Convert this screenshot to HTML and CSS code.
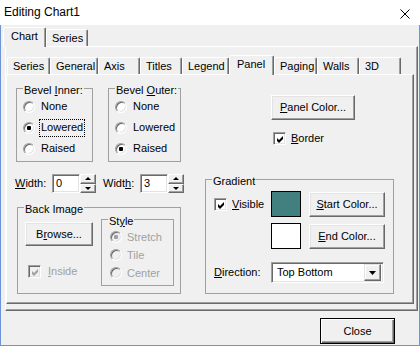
FILE: index.html
```html
<!DOCTYPE html>
<html>
<head>
<meta charset="utf-8">
<title>Editing Chart1</title>
<link rel="stylesheet" href="styles.css">
</head>
<body>
<div class="window">
  <div class="titlebar">
    <span class="title">Editing Chart1</span>
    <svg class="xicon" width="10" height="10" viewBox="0 0 10 10"><path d="M0.5 0.5L9.5 9.5M9.5 0.5L0.5 9.5" stroke="#000" stroke-width="1" fill="none"/></svg>
  </div>
  <div class="frame">
    <div class="tabrow otabs">
      <div class="tab sel">Chart</div>
      <div class="tab">Series</div>
    </div>
    <div class="outer-panel">
      <div class="tabrow itabs">
        <div class="tab">Series</div>
        <div class="tab">General</div>
        <div class="tab">Axis</div>
        <div class="tab">Titles</div>
        <div class="tab">Legend</div>
        <div class="tab sel">Panel</div>
        <div class="tab">Paging</div>
        <div class="tab">Walls</div>
        <div class="tab">3D</div>
      </div>
      <div class="inner-panel">
        <div class="col-left">
          <div class="bevel-row">
            <div class="group bevel-inner">
              <span class="legend">Bevel <u>I</u>nner:</span>
              <div class="radios">
                <div class="ropt"><span class="radio"></span><span class="rlabel">None</span></div>
                <div class="ropt"><span class="radio on"></span><span class="rlabel focus">Lowered</span></div>
                <div class="ropt"><span class="radio"></span><span class="rlabel">Raised</span></div>
              </div>
            </div>
            <div class="group bevel-outer">
              <span class="legend">Bevel <u>O</u>uter:</span>
              <div class="radios">
                <div class="ropt"><span class="radio"></span><span class="rlabel">None</span></div>
                <div class="ropt"><span class="radio"></span><span class="rlabel">Lowered</span></div>
                <div class="ropt"><span class="radio on"></span><span class="rlabel">Raised</span></div>
              </div>
            </div>
          </div>
          <div class="widthrow">
            <span class="wlabel"><u>W</u>idth:</span>
            <span class="field">0</span>
            <span class="spin"><span class="sbtn"><span class="tri up"></span></span><span class="sbtn"><span class="tri down"></span></span></span>
            <span class="wlabel wlabel2">Widt<u>h</u>:</span>
            <span class="field">3</span>
            <span class="spin"><span class="sbtn"><span class="tri up"></span></span><span class="sbtn"><span class="tri down"></span></span></span>
          </div>
          <div class="group back">
            <span class="legend">Back Image</span>
            <div class="back-left">
              <button class="btn browse">B<u>r</u>owse...</button>
              <div class="crow inside">
                <span class="check dis"><svg width="9" height="9" viewBox="0 0 9 9"><polygon points="1,3 3,5 7,1 7,4 3,8 1,6" fill="#a0a0a0"/></svg></span>
                <span class="clabel dim"><u>I</u>nside</span>
              </div>
            </div>
            <div class="group style">
              <span class="legend">St<u>y</u>le</span>
              <div class="sradios">
                <div class="sopt"><span class="radio dis on"></span><span class="slabel">Stretch</span></div>
                <div class="sopt"><span class="radio dis"></span><span class="slabel">Tile</span></div>
                <div class="sopt"><span class="radio dis"></span><span class="slabel">Center</span></div>
              </div>
            </div>
          </div>
        </div>
        <div class="col-right">
          <button class="btn panelcolor"><u>P</u>anel Color...</button>
          <div class="crow border-row">
            <span class="check"><svg width="9" height="9" viewBox="0 0 9 9"><polygon points="1,3 3,5 7,1 7,4 3,8 1,6" fill="#000"/></svg></span>
            <span class="clabel"><u>B</u>order</span>
          </div>
          <div class="group gradient">
            <span class="legend">Gradient</span>
            <div class="gbody">
              <div class="grow">
                <div class="gcell crow">
                  <span class="check"><svg width="9" height="9" viewBox="0 0 9 9"><polygon points="1,3 3,5 7,1 7,4 3,8 1,6" fill="#000"/></svg></span>
                  <span class="clabel vis"><u>V</u>isible</span>
                </div>
                <span class="swatch teal"></span>
                <button class="btn gbtn"><u>S</u>tart Color...</button>
              </div>
              <div class="grow grow2">
                <div class="gcell"></div>
                <span class="swatch white"></span>
                <button class="btn gbtn"><u>E</u>nd Color...</button>
              </div>
              <div class="grow grow3">
                <div class="gcell"><u>D</u>irection:</div>
                <div class="combo"><span class="ctext">Top Bottom</span><span class="cbtn"><svg width="7" height="4" viewBox="0 0 7 4"><polygon points="0,0 7,0 3.5,4" fill="#000"/></svg></span></div>
              </div>
            </div>
          </div>
        </div>
      </div>
    </div>
    <div class="footer">
      <button class="btn default closebtn">Close</button>
    </div>
  </div>
</div>
</body>
</html>
```
FILE: styles.css
```css
* { box-sizing: border-box; }
html, body { margin: 0; padding: 0; }
body {
  width: 420px; height: 346px; overflow: hidden;
  font: 11px/13px "Liberation Sans", Arial, sans-serif;
  color: #000; background: #fff;
}
u { text-decoration: underline; text-underline-offset: 1px; }
.window { width: 420px; height: 346px; display: flex; flex-direction: column; }

.titlebar {
  flex: 0 0 25px; height: 25px; background: #fff;
  display: flex; justify-content: space-between; align-items: flex-start;
  padding: 0 10px 0 4px; font-size: 12px; line-height: 25px;
}
.title { color: #000; }
.xicon { display: block; margin-top: 9px; }

.frame {
  flex: 1; background: #f0f0f0;
  border: 1px solid #6e94d6; border-top: 0;
  padding-top: 2px; display: flex; flex-direction: column;
}

/* tabs */
.tabrow { display: flex; align-items: flex-end; height: 19px; position: relative; z-index: 1; }
.tab {
  height: 17px; padding: 2px 0 0 5px; background: #f0f0f0;
  border: 1px solid; border-bottom: 0;
  border-color: #fff #696969 transparent #fff;
  box-shadow: inset -1px 0 #a0a0a0;
  border-radius: 2px 2px 0 0; white-space: nowrap; line-height: 13px;
}
.tab.sel { height: 20px; margin-bottom: -1px; padding-left: 7px; }
.otabs { margin-left: 2px; }
.otabs .tab:nth-child(1) { width: 43px; }
.otabs .tab:nth-child(2) { width: 42px; }
.itabs { margin-left: 1px; }
.itabs .tab:nth-child(1) { width: 43px; }
.itabs .tab:nth-child(2) { width: 48px; }
.itabs .tab:nth-child(3) { width: 42px; }
.itabs .tab:nth-child(4) { width: 42px; }
.itabs .tab:nth-child(5) { width: 47px; }
.itabs .tab:nth-child(6) { width: 45px; }
.itabs .tab:nth-child(7) { width: 43px; }
.itabs .tab:nth-child(8) { width: 42px; }
.itabs .tab:nth-child(9) { width: 42px; }

.outer-panel {
  margin-left: 4px; width: 413px; height: 265px;
  border: 1px solid; border-color: #fff #696969 #696969 #fff;
  box-shadow: inset -1px -1px #a0a0a0;
  padding-top: 8px;
}
.inner-panel {
  width: 408px; height: 230px;
  border: 1px solid; border-color: #fff #696969 #696969 #fff;
  box-shadow: inset -1px -1px #a0a0a0;
  display: flex; padding: 13px 0 0 9px;
}
.col-left { flex: 0 0 189px; display: flex; flex-direction: column; align-items: flex-start; }
.col-right { flex: 0 0 190px; display: flex; flex-direction: column; align-items: flex-start; }

/* group boxes */
.group { position: relative; border: 1px solid #a0a0a0; }
.legend {
  position: absolute; top: -5px; left: 6px; padding: 0 1px;
  background: #f0f0f0; line-height: 13px; white-space: nowrap;
}
.bevel-row { display: flex; }
.bevel-inner { width: 77px; height: 74px; }
.bevel-outer { width: 73px; height: 74px; margin-left: 15px; }
.radios { padding: 7px 0 0 6px; }
.ropt { display: flex; align-items: center; height: 21px; }
.rlabel { margin-left: 4px; border: 1px dotted transparent; padding: 1px 1px 2px 1px; }
.rlabel.focus { border-color: #000; }

.radio {
  flex: none; position: relative; width: 12px; height: 12px; border-radius: 50%;
  border: 1px solid; border-color: #a0a0a0 #fff #fff #a0a0a0;
  background: #fff;
  box-shadow: inset 1px 1px #696969, inset -1px -1px #e3e3e3;
}
.radio.dis { background: #f0f0f0; }
.radio.on::after {
  content: ""; position: absolute; left: 3px; top: 3px; width: 4px; height: 4px;
  border-radius: 1px; background: #000;
}
.radio.dis.on::after { background: #a0a0a0; }

/* width row */
.widthrow { display: flex; align-items: center; height: 19px; margin: 12px 0 0 -1px; }
.wlabel { width: 37px; }
.wlabel2 { margin-left: 7px; }
.field {
  width: 28px; height: 19px; background: #fff; padding: 1px 0 0 3px; line-height: 15px;
  border: 1px solid; border-color: #a0a0a0 #fff #fff #a0a0a0;
  box-shadow: inset 1px 1px #696969, inset -1px -1px #e3e3e3;
}
.spin { width: 16px; height: 19px; display: flex; flex-direction: column; }
.sbtn {
  flex: 1; display: flex; align-items: center; justify-content: center; background: #f0f0f0;
  border: 1px solid; border-color: #fff #696969 #696969 #fff;
  box-shadow: inset -1px -1px #a0a0a0;
}
.tri { width: 0; height: 0; border-left: 3px solid transparent; border-right: 3px solid transparent; }
.tri.up { border-bottom: 3px solid #000; }
.tri.down { border-top: 3px solid #000; }

/* back image */
.back { width: 164px; height: 87px; margin: 14px 0 0 1px; display: flex; }
.back-left { width: 68px; margin: 14px 0 0 7px; }
.browse { width: 68px; height: 24px; }
.inside { margin: 19px 0 0 3px; }
.style { width: 73px; height: 67px; margin: 11px 0 0 8px; }
.sradios { padding: 8px 0 0 8px; }
.sopt { display: flex; align-items: center; height: 18px; }
.slabel { margin-left: 5px; color: #a0a0a0; }

/* buttons */
.btn {
  font: inherit; color: #000; padding: 0; margin: 0; background: #f0f0f0;
  border: 1px solid; border-color: #fff #696969 #696969 #fff;
  box-shadow: inset -1px -1px #a0a0a0, inset 1px 1px #e3e3e3;
  text-align: center; line-height: 13px; display: block;
}
.btn.default {
  border: 1px solid #000;
  box-shadow: inset 1px 1px #fff, inset -1px -1px #696969, inset -2px -2px #a0a0a0;
}

/* checkboxes */
.crow { display: flex; align-items: center; }
.check {
  flex: none; width: 13px; height: 13px; background: #fff; padding: 2px;
  border: 1px solid; border-color: #a0a0a0 #fff #fff #a0a0a0;
  box-shadow: inset 1px 1px #696969, inset -1px -1px #e3e3e3;
}
.check svg { display: block; }
.check.dis { background: #f0f0f0; }
.clabel { margin-left: 7px; }
.clabel.dim { color: #a0a0a0; }

/* right column */
.panelcolor { width: 84px; height: 25px; margin: 7px 0 0 66px; }
.border-row { margin: 12px 0 0 68px; height: 13px; }
.border-row .clabel { margin-left: 5px; }
.gradient { width: 189px; height: 115px; margin-top: 34px; }
.gbody { padding: 11px 0 0 8px; }
.grow { display: flex; align-items: center; height: 26px; }
.grow2 { margin-top: 6px; }
.grow3 { margin-top: 13px; height: 21px; }
.gcell { width: 57px; flex: none; }
.clabel.vis { margin-left: 5px; }
.swatch { flex: none; width: 30px; height: 26px; border: 1px solid #000; }
.swatch.teal { background: #428080; }
.swatch.white { background: #fff; }
.gbtn { width: 76px; height: 25px; margin-left: 8px; align-self: flex-end; }
.combo {
  width: 113px; height: 21px; background: #fff; display: flex; align-items: center;
  padding: 2px;
  border: 1px solid; border-color: #a0a0a0 #fff #fff #a0a0a0;
  box-shadow: inset 1px 1px #696969, inset -1px -1px #e3e3e3;
}
.ctext { flex: 1; padding-left: 3px; }
.cbtn {
  width: 17px; height: 17px; display: flex; align-items: center; justify-content: center;
  background: #f0f0f0;
  border: 1px solid; border-color: #e3e3e3 #696969 #696969 #e3e3e3;
  box-shadow: inset -1px -1px #a0a0a0, inset 1px 1px #fff;
}
.cbtn svg { display: block; }

/* footer */
.footer { display: flex; justify-content: flex-end; padding: 7px 24px 0 0; }
.closebtn { width: 75px; height: 26px; }
```
